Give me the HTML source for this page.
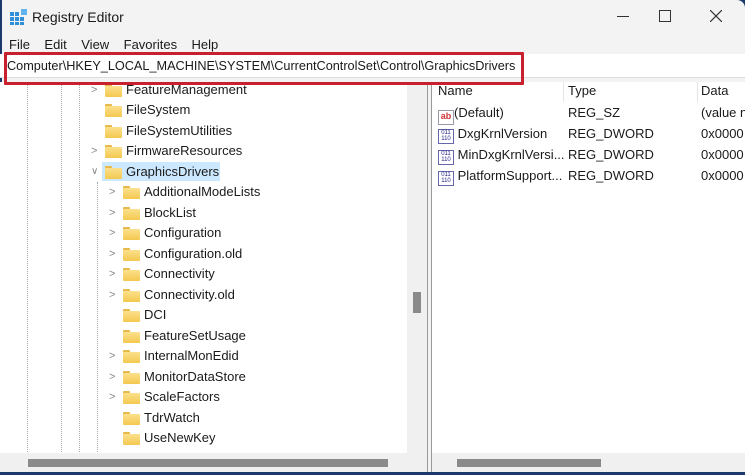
<!DOCTYPE html><html><head><style>
body{margin:0;width:745px;height:475px;overflow:hidden;background:#1b3a6b;font-family:"Liberation Sans",sans-serif;font-size:13px;color:#1a1a1a;position:relative}
.win{position:absolute;left:2px;top:0;width:743px;height:472px;background:#f3f3f3;border-radius:0 8px 8px 8px}
.a{position:absolute}
.row{position:absolute;height:20px;line-height:20px;white-space:nowrap}
.f{position:absolute;width:17px;height:13px;top:4px}
.f:before{content:"";position:absolute;left:0;top:0;width:7px;height:3px;background:#e7b94a;border-radius:1px 1px 0 0}
.f:after{content:"";position:absolute;left:0;top:2px;width:17px;height:11px;background:linear-gradient(#fbe08c,#f4c84f);border-radius:1px}
.ch{position:absolute;top:0;color:#888;font-size:11px}
.dl{position:absolute;border-left:1px dotted #aaa}
</style></head><body>
<div class="win">
<svg class="a" style="left:8px;top:9px" width="18" height="16"><g fill="#2f8fd8"><rect x="0" y="3" width="4" height="4"/><rect x="5" y="3" width="4" height="4"/><rect x="0" y="8" width="4" height="4"/><rect x="5" y="8" width="4" height="4"/><rect x="10" y="8" width="4" height="4"/><rect x="0" y="13" width="4" height="3"/><rect x="5" y="13" width="4" height="3"/><rect x="10" y="13" width="4" height="3"/></g><rect x="11" y="0" width="6" height="6" fill="#5fb4ee"/></svg>
<div class="a" style="left:30px;top:9px;font-size:14px">Registry Editor</div>
<div class="a" style="left:615px;top:16px;width:12px;height:1px;background:#333"></div>
<div class="a" style="left:657px;top:10px;width:10px;height:10px;border:1px solid #333"></div>
<svg class="a" style="left:708px;top:10px" width="12" height="12"><path d="M0 0L12 12M12 0L0 12" stroke="#333" stroke-width="1.2"/></svg>
<div class="a" style="left:7px;top:37px">File&nbsp;&nbsp;&nbsp;&nbsp;Edit&nbsp;&nbsp;&nbsp;&nbsp;View&nbsp;&nbsp;&nbsp;&nbsp;Favorites&nbsp;&nbsp;&nbsp;&nbsp;Help</div>
<div class="a" style="left:-2px;top:54px;width:745px;height:23px;background:#fff;border-bottom:1px solid #ddd"></div>
<div class="a" style="left:5px;top:59px;font-size:12.7px">Computer\HKEY_LOCAL_MACHINE\SYSTEM\CurrentControlSet\Control\GraphicsDrivers</div>
<div class="a" style="left:-2px;top:82px;width:407px;height:371px;background:#fff"></div>
<div class="a" style="left:405px;top:82px;width:19px;height:371px;background:#f0f0f0"></div>
<div class="a" style="left:411px;top:292px;width:8px;height:21px;background:#8a8a8a"></div>
<div class="a" style="left:425px;top:82px;width:1px;height:390px;background:#999"></div>
<div class="a" style="left:429px;top:82px;width:1px;height:390px;background:#999"></div>
<div class="a" style="left:430px;top:82px;width:313px;height:371px;background:#fff"></div>
<div class="dl" style="left:25px;top:82px;height:370px"></div>
<div class="dl" style="left:59px;top:82px;height:370px"></div>
<div class="dl" style="left:77px;top:82px;height:370px"></div>
<div class="dl" style="left:95px;top:182px;height:270px"></div>
<div class="a" style="left:100px;top:162px;width:118px;height:19px;background:#cce8ff"></div>
<div class="a" style="left:-2px;top:453px;width:427px;height:19px;background:#f0f0f0"></div>
<div class="a" style="left:26px;top:459px;width:360px;height:8px;background:#8a8a8a"></div>
<div class="a" style="left:430px;top:453px;width:313px;height:19px;background:#f0f0f0"></div>
<div class="a" style="left:455px;top:459px;width:144px;height:8px;background:#8a8a8a"></div>
<div class="a" style="left:561px;top:82px;width:1px;height:20px;background:#e5e5e5"></div>
<div class="a" style="left:695px;top:82px;width:1px;height:20px;background:#e5e5e5"></div>
<div class="row" style="left:436px;top:81px">Name</div>
<div class="row" style="left:566px;top:81px">Type</div>
<div class="row" style="left:699px;top:81px">Data</div>
<div class="row" style="left:436px;top:103px"><span style="display:inline-block;width:14px;height:13px;border:1px solid #99a;font-size:9px;line-height:11px;color:#c33;font-weight:bold;vertical-align:-2px;text-align:center">ab</span>(Default)</div>
<div class="row" style="left:566px;top:103px">REG_SZ</div><div class="row" style="left:699px;top:103px">(value n</div>
<div class="row" style="left:436px;top:124px"><span style="display:inline-block;width:14px;height:13px;border:1px solid #66a;font-size:6px;line-height:6px;color:#228;vertical-align:-2px;text-align:center">011<br>110</span> DxgKrnlVersion</div>
<div class="row" style="left:566px;top:124px">REG_DWORD</div><div class="row" style="left:699px;top:124px">0x0000</div>
<div class="row" style="left:436px;top:145px"><span style="display:inline-block;width:14px;height:13px;border:1px solid #66a;font-size:6px;line-height:6px;color:#228;vertical-align:-2px;text-align:center">011<br>110</span> MinDxgKrnlVersi...</div>
<div class="row" style="left:566px;top:145px">REG_DWORD</div><div class="row" style="left:699px;top:145px">0x0000</div>
<div class="row" style="left:436px;top:166px"><span style="display:inline-block;width:14px;height:13px;border:1px solid #66a;font-size:6px;line-height:6px;color:#228;vertical-align:-2px;text-align:center">011<br>110</span> PlatformSupport...</div>
<div class="row" style="left:566px;top:166px">REG_DWORD</div><div class="row" style="left:699px;top:166px">0x0000</div>

<div class="row" style="top:80px;left:89px"><span class="ch" style="left:0">&gt;</span><span class="f" style="left:14px"></span><span style="position:absolute;left:35px">FeatureManagement</span></div>
<div class="row" style="top:100px;left:89px"><span class="f" style="left:14px"></span><span style="position:absolute;left:35px">FileSystem</span></div>
<div class="row" style="top:121px;left:89px"><span class="f" style="left:14px"></span><span style="position:absolute;left:35px">FileSystemUtilities</span></div>
<div class="row" style="top:141px;left:89px"><span class="ch" style="left:0">&gt;</span><span class="f" style="left:14px"></span><span style="position:absolute;left:35px">FirmwareResources</span></div>
<div class="row" style="top:162px;left:89px"><span class="ch" style="left:0;font-size:10px">&#8744;</span><span class="f" style="left:14px"></span><span style="position:absolute;left:35px">GraphicsDrivers</span></div>
<div class="row" style="top:182px;left:107px"><span class="ch">&gt;</span><span class="f" style="left:14px"></span><span style="position:absolute;left:35px">AdditionalModeLists</span></div>
<div class="row" style="top:203px;left:107px"><span class="ch">&gt;</span><span class="f" style="left:14px"></span><span style="position:absolute;left:35px">BlockList</span></div>
<div class="row" style="top:223px;left:107px"><span class="ch">&gt;</span><span class="f" style="left:14px"></span><span style="position:absolute;left:35px">Configuration</span></div>
<div class="row" style="top:244px;left:107px"><span class="ch">&gt;</span><span class="f" style="left:14px"></span><span style="position:absolute;left:35px">Configuration.old</span></div>
<div class="row" style="top:264px;left:107px"><span class="ch">&gt;</span><span class="f" style="left:14px"></span><span style="position:absolute;left:35px">Connectivity</span></div>
<div class="row" style="top:285px;left:107px"><span class="ch">&gt;</span><span class="f" style="left:14px"></span><span style="position:absolute;left:35px">Connectivity.old</span></div>
<div class="row" style="top:305px;left:107px"><span class="f" style="left:14px"></span><span style="position:absolute;left:35px">DCI</span></div>
<div class="row" style="top:326px;left:107px"><span class="f" style="left:14px"></span><span style="position:absolute;left:35px">FeatureSetUsage</span></div>
<div class="row" style="top:346px;left:107px"><span class="ch">&gt;</span><span class="f" style="left:14px"></span><span style="position:absolute;left:35px">InternalMonEdid</span></div>
<div class="row" style="top:367px;left:107px"><span class="ch">&gt;</span><span class="f" style="left:14px"></span><span style="position:absolute;left:35px">MonitorDataStore</span></div>
<div class="row" style="top:387px;left:107px"><span class="ch">&gt;</span><span class="f" style="left:14px"></span><span style="position:absolute;left:35px">ScaleFactors</span></div>
<div class="row" style="top:408px;left:107px"><span class="f" style="left:14px"></span><span style="position:absolute;left:35px">TdrWatch</span></div>
<div class="row" style="top:428px;left:107px"><span class="f" style="left:14px"></span><span style="position:absolute;left:35px">UseNewKey</span></div>
<div class="a" style="left:2px;top:52px;width:514px;height:27px;border:3px solid #c8202c;border-radius:1px"></div>
</div>
</body></html>
